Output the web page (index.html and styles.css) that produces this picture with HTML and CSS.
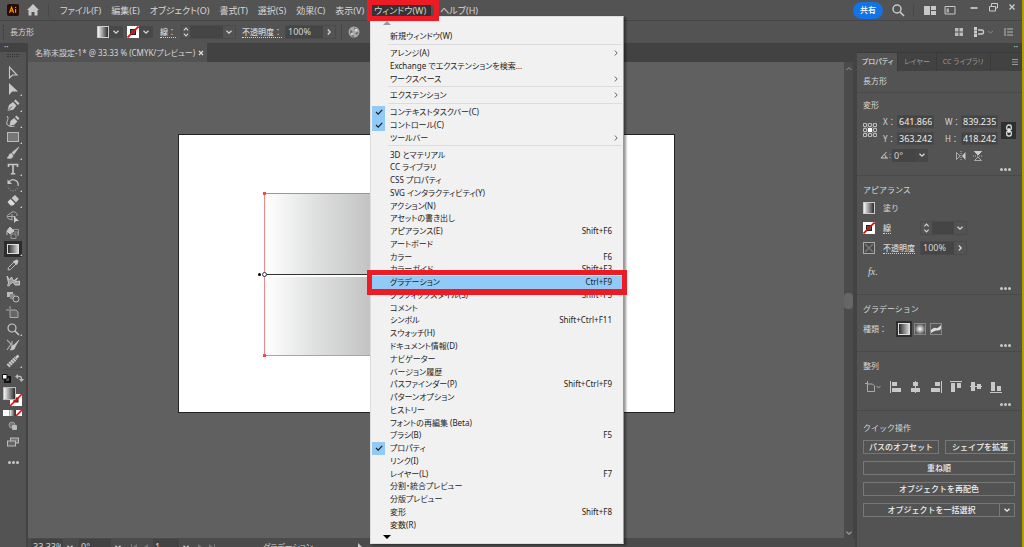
FILE: index.html
```html
<!DOCTYPE html>
<html lang="ja">
<head>
<meta charset="utf-8">
<meta name="viewport" content="width=device-width, initial-scale=1">
<title>名称未設定-1</title>
<link rel="stylesheet" href="styles.css">
</head>
<body>
<svg class="defs" aria-hidden="true">
  <defs>
    <linearGradient id="gw"><stop offset="0" stop-color="#fff"/><stop offset="1" stop-color="#222"/></linearGradient>
    <linearGradient id="gb"><stop offset="0" stop-color="#222"/><stop offset="1" stop-color="#ddd"/></linearGradient>
    <radialGradient id="gr"><stop offset="0" stop-color="#fff"/><stop offset="1" stop-color="#555"/></radialGradient>
  </defs>
  <symbol id="chev" viewBox="0 0 8 8"><path d="M1.5 2.8 4 5.2 6.5 2.8" fill="none" stroke="currentColor" stroke-width="1.3"/></symbol>
  <symbol id="next" viewBox="0 0 8 8"><path d="M2.8 1.5 5.2 4 2.8 6.5" fill="none" stroke="currentColor" stroke-width="1.3"/></symbol>
  <symbol id="sub" viewBox="0 0 8 8"><path d="M2.8 1.5 5.2 4 2.8 6.5" fill="none" stroke="currentColor" stroke-width=".9"/></symbol>
  <symbol id="spin" viewBox="0 0 8 14"><path d="M1.5 5 4 2.5 6.5 5M1.5 9 4 11.5 6.5 9" fill="none" stroke="currentColor" stroke-width="1.3"/></symbol>
  <symbol id="tick" viewBox="0 0 8 8"><path d="M1 4 3.2 6.2 7.2 1.8" fill="none" stroke="currentColor" stroke-width="1.1"/></symbol>
  <symbol id="fillsw" viewBox="0 0 12 12"><rect x=".5" y=".5" width="11" height="11" fill="url(#gw)" stroke="#ccc"/></symbol>
  <symbol id="strokesw" viewBox="0 0 12 12"><rect width="12" height="12" fill="#fff"/><rect x="3.5" y="3.5" width="5" height="5" fill="#535353" stroke="#222"/><path d="M.5 11.5 11.5.5" stroke="#f00" stroke-width="1.8"/></symbol>
</svg>

<header class="menubar">
  <svg class="logo" viewBox="0 0 12 12"><rect width="12" height="12" rx="2" fill="#2c0b00"/><path d="M2.500 8.800 4.600 3.300 6.700 8.800M3.200 7h2.800M8.600 5v3.800M8.600 3v1" fill="none" stroke="#ff9a00" stroke-width="1.1"/></svg>
  <svg class="home" viewBox="0 0 14 14"><path d="M7 1 1 7h1.500v5.500h3V9h3v3.500h3V7H13z" fill="#c8c8c8"/></svg>
  <nav class="menus">
    <button>ファイル(F)</button>
    <button>編集(E)</button>
    <button>オブジェクト(O)</button>
    <button>書式(T)</button>
    <button>選択(S)</button>
    <button>効果(C)</button>
    <button>表示(V)</button>
    <button class="open">ウィンドウ(W)</button>
    <button>ヘルプ(H)</button>
  </nav>
  <div class="window-tools">
    <button class="share">共有</button>
    <button aria-label="検索"><svg width="14" height="14" viewBox="0 0 14 14"><circle cx="6" cy="6" r="4" fill="none" stroke="#c8c8c8" stroke-width="1.5"/><path d="m9 9 4 4" stroke="#c8c8c8" stroke-width="1.7"/></svg></button>
    <i class="vline"></i>
    <button aria-label="ドキュメントの整列"><svg width="12" height="12" viewBox="0 0 12 12"><path d="M0 2h6v9H0zM7 2h5v4H7zM7 7h5v4H7z" fill="#c8c8c8"/></svg></button>
    <button aria-label="ワークスペース"><svg width="12" height="12" viewBox="0 0 12 12"><path d="M1 2.500h10v7.500H1z" fill="none" stroke="#c8c8c8"/><path d="M2.500 4.500h2.500v4H2.500z" fill="#aaa"/></svg></button>
    <div class="window-buttons">
      <button aria-label="最小化"><svg width="10" height="10" viewBox="0 0 10 10"><path d="M1.500 6h7" stroke="#ccc" stroke-width="1.7"/></svg></button>
      <button aria-label="元に戻す"><svg width="10" height="10" viewBox="0 0 10 10"><path d="M3.500 1.500h6v4.500h-2v3h-6V4.500h2zM3.500 4.500h4V6" fill="none" stroke="#ccc"/></svg></button>
      <button aria-label="閉じる"><svg width="10" height="10" viewBox="0 0 10 10"><path d="m2.500 2.500 5 5m0-5-5 5" stroke="#ccc" stroke-width="1.3"/></svg></button>
    </div>
  </div>
</header>

<section class="controlbar">
  <i class="grip"></i>
  <span class="kind">長方形</span>
  <button class="sw" aria-label="塗り"><svg width="12" height="12"><use href="#fillsw"/></svg><svg class="dark" width="14" height="12"><use href="#chev" x="3" y="2" width="8" height="8"/></svg></button>
  <button class="sw stroke-button" aria-label="線"><svg width="12" height="12"><use href="#strokesw"/></svg><svg class="dark" width="14" height="12"><use href="#chev" x="3" y="2" width="8" height="8"/></svg></button>
  <label class="dotted" for="cw">線：</label>
  <span class="combo stroke-combo"><svg width="8" height="12"><use href="#spin"/></svg><input id="cw" type="text"><svg width="12" height="12"><use href="#chev" x="2" y="2" width="8" height="8"/></svg></span>
  <label class="dotted" for="co">不透明度：</label>
  <span class="combo opacity-combo"><input id="co" type="text" value="100%"><svg width="12" height="12"><use href="#next" x="2" y="2" width="8" height="8"/></svg></span>
  <i class="vline"></i>
  <svg class="globe" width="12" height="12" viewBox="0 0 12 12"><circle cx="6" cy="6" r="5.5" fill="#aaa"/><path d="M2.500 3.500 5 6 2 8zM6 1.500l3 1L7 5zM7 7l3.500-1L9 9zM5 8l1 3-3-1z" fill="#666"/><circle cx="8" cy="4" r="1.300" fill="#ddd"/><circle cx="4" cy="8" r="1.200" fill="#ccc"/></svg>
  <div class="bar-end">
    <svg width="10" height="10" viewBox="0 0 10 10"><path d="M1 1h3.500v3.500H1zM5.500 1H9v3.500H5.500zM1 5.500h3.500V9H1zM5.500 5.500H9V9H5.500z" fill="#bbb"/></svg>
    <svg width="22" height="10" viewBox="0 0 22 10"><path d="M1 0h3v3H1zM1 3.500h3v3H1zM1 7h3v3H1z" fill="#ccc"/><path d="M5 3h3.500a2 2 0 0 1 0 4H5" fill="none" stroke="#ccc" stroke-width="1.4"/><path d="m15 4 2.500 2L20 4" fill="none" stroke="#888"/></svg>
    <svg width="10" height="10" viewBox="0 0 10 10"><path d="M1 1v8M3 2h6M3 5h6M3 8h6" stroke="#bbb"/></svg>
  </div>
</section>

<main class="workspace">
  <aside class="toolbar">
    <div class="dock-head">••</div>
    <i class="tool-grip"></i>
    <div class="tools">
      <button aria-label="選択"><svg viewBox="0 0 14 14"><path d="M3.500 1v11l3-3H11z" fill="none" stroke="#c8c8c8" stroke-width="1.1"/></svg></button>
      <button class="more" aria-label="ダイレクト選択"><svg viewBox="0 0 14 14"><path d="M3 1v12l3.200-3.500H12z" fill="#c8c8c8"/></svg></button>
      <button class="more" aria-label="ペン"><svg viewBox="0 0 14 14"><path d="m1.500 13 1.500-6 4-3 3.500 3.500-3 4zM8 3l1.500-1.500 4 4L12 7z" fill="#c8c8c8"/><path d="m2 12.500 4-4" stroke="#535353"/></svg></button>
      <button class="more" aria-label="曲線"><svg viewBox="0 0 14 14"><path d="m3.500 12 1-5 3.500-3 3.500 3.500-3 3zM9 3l1.500-1.500 3 3L12 6z" fill="#c8c8c8"/><path d="M1 2c3 3-2 6 .5 9 2 1.500 4 2 7 1" fill="none" stroke="#c8c8c8"/></svg></button>
      <button class="more" aria-label="長方形"><svg viewBox="0 0 14 14"><rect x="1.500" y="2.500" width="11" height="9" fill="#777" stroke="#bbb"/></svg></button>
      <button class="more" aria-label="ブラシ"><svg viewBox="0 0 14 14"><path d="M13 1 6 6.500 7.800 8.500zM5.500 7.500c-3 0-2 3-4.500 4.500 3 1 6 .5 6-2.500z" fill="#c8c8c8" stroke="#c8c8c8" stroke-width=".6"/></svg></button>
      <button class="more" aria-label="文字"><svg viewBox="0 0 14 14"><path d="M2.500 5V2.500h9V5M7 2.500v9M4.800 11.800h4.400" fill="none" stroke="#c8c8c8" stroke-width="1.6"/></svg></button>
      <button class="more" aria-label="回転"><svg viewBox="0 0 14 14"><path d="M3 4a5 5 0 0 1 9 4" fill="none" stroke="#c8c8c8" stroke-width="1.2"/><path d="M11.500 10a5 5 0 0 1-9.500-2" fill="none" stroke="#aaa" stroke-dasharray="1 1.500"/><path d="M1.500 1.500V6H6z" fill="#c8c8c8"/></svg></button>
      <button class="more" aria-label="消しゴム"><svg viewBox="0 0 14 14"><path d="M5.500 4 9 1l4 4-3 3.500z" fill="#c8c8c8"/><path d="m4.500 5 4.500 4.500-2 2H4.500L1.500 8z" fill="#ddd"/></svg></button>
      <button aria-label="シェイプ形成"><svg viewBox="0 0 14 14"><path d="M3 9C0 8 1 4 4 4c2-4 8-2 7 2M3 9l4 1M1.500 6.500h8M6 4v5" fill="none" stroke="#aaa"/><path d="M8 6v7l2-2h3z" fill="#ccc"/></svg></button>
      <button aria-label="ライブペイント"><svg viewBox="0 0 14 14"><path d="M1 5 4 1l4 4-4 3zM1 5v4" fill="#c8c8c8" stroke="#c8c8c8"/><path d="M7 3.500h5.500V9M5 8h5v4.500H5zM8 6h4v4" fill="none" stroke="#999"/></svg></button>
      <button class="more active" aria-label="グラデーション"><svg viewBox="0 0 14 14"><rect x="1.500" y="2.500" width="11" height="9" fill="url(#gb)" stroke="#ddd"/></svg></button>
      <button aria-label="スポイト"><svg viewBox="0 0 14 14"><path d="m2 12 .5-2.500L8 4l2 2-5.500 5.500z" fill="none" stroke="#bbb"/><path d="M7 3.500 10.500 7l1-1L12.500 3 11 1.500 8.500 2.500z" fill="#c8c8c8"/></svg></button>
      <button aria-label="パペットワープ"><svg viewBox="0 0 14 14"><path d="m1 2 2.500 4 2-3 2 4 4-3-2.500 4 4.500-1v4H9L7 8 3 11z" fill="#999" stroke="#c8c8c8"/><circle cx="2.500" cy="11" r="1.500" fill="#aaa"/></svg></button>
      <button aria-label="ブレンド"><svg viewBox="0 0 14 14"><path d="M1 2h6v5H1z" fill="#bbb"/><path d="M4 4h5v5H4z" fill="#888"/><circle cx="10" cy="9" r="3" fill="#535353" stroke="#bbb"/></svg></button>
      <button aria-label="アートボード"><svg viewBox="0 0 14 14"><path d="M4 0v3.500M0 4h3M4 4h6l2 2v5.500H4z" fill="#666" stroke="#aaa"/></svg></button>
      <button class="more" aria-label="ズーム"><svg viewBox="0 0 14 14"><circle cx="6" cy="6" r="4" fill="none" stroke="#c8c8c8" stroke-width="1.2"/><path d="m9 9 4 4" stroke="#c8c8c8" stroke-width="1.6"/></svg></button>
      <button aria-label="交差"><svg viewBox="0 0 14 14"><path d="m1 2 4 4-4 6M6 3v6" fill="none" stroke="#aaa" stroke-width="1.2"/><path d="M13 2 8 7l1 2zM8 7c-3 0-2 4-4 5 4 0 5-1 5-3z" fill="#c8c8c8" stroke="#c8c8c8" stroke-width=".6"/></svg></button>
      <button class="more" aria-label="鉛筆"><svg viewBox="0 0 14 14"><path d="m2 12 8-8" stroke="#c8c8c8" stroke-width="4" stroke-dasharray="2 .6"/><path d="m10 4 2.500-2.500" stroke="#c8c8c8" stroke-width="2.5"/></svg></button>
    </div>
    <div class="swap">
      <svg width="9" height="9" viewBox="0 0 9 9"><path d="M3 3h5v5H3z" fill="none" stroke="#111" stroke-width="2"/><path d="M.5.5h4.500v4.500H.5z" fill="#fff" stroke="#111"/></svg>
      <svg width="9" height="9" viewBox="0 0 9 9"><path d="M2 2.500h3q1.500 0 1.500 3" fill="none" stroke="#bbb" stroke-width="1.3"/><path d="M3 0v5L0 2.500zM4 5h5L6.500 8z" fill="#bbb"/></svg>
    </div>
    <svg class="paint" viewBox="0 0 20 20"><rect x="7" y="7" width="12" height="12" fill="#fff"/><rect x="11" y="11" width="4" height="4" fill="#535353" stroke="#222"/><rect x=".5" y=".5" width="12" height="12" fill="url(#gw)" stroke="#bbb"/><path d="M7 19 19 7" stroke="#f00" stroke-width="1.6"/></svg>
    <svg class="modes" viewBox="0 0 20 6"><rect width="6" height="6" fill="#fff"/><rect x="6.500" width="6" height="6" fill="url(#gw)"/><rect x="13" width="6" height="6" fill="#fff"/><path d="m13 6 6-6" stroke="#f00" stroke-width="1.6"/></svg>
    <svg class="draw-mode" viewBox="0 0 14 14"><circle cx="6" cy="6" r="3" fill="#777" stroke="#999"/><rect x="6" y="6" width="5" height="5" rx="1" fill="#bbb"/></svg>
    <svg class="screen-mode" viewBox="0 0 14 14"><rect x="4.500" y="3" width="8" height="5" fill="#777" stroke="#bbb"/><rect x="1.500" y="6" width="8" height="5" fill="#666" stroke="#bbb"/></svg>
    <button class="dots" aria-label="ツールバーを編集"><i></i><i></i><i></i></button>
  </aside>

  <section class="document">
    <div class="doc-tabs"><div class="doc-tab"><span>名称未設定-1* @ 33.33 % (CMYK/プレビュー)</span><button aria-label="タブを閉じる"><svg width="8" height="8" viewBox="0 0 8 8"><path d="m2 2 4 4m0-4L2 6" stroke="#ddd" stroke-width="1.2"/></svg></button></div></div>
    <div class="view">
      <div class="canvas">
        <div class="artboard">
          <div class="shape"><i class="axis"></i><i class="origin"></i><i class="pivot"></i></div>
        </div>
      </div>
      <div class="scroll"><svg width="8" height="8" viewBox="0 0 8 8"><path d="M1.500 5 4 2.500 6.500 5" fill="none" stroke="#999"/></svg><i></i><svg width="8" height="8"><use href="#chev"/></svg></div>
    </div>
    <footer class="status">
      <select class="s-zoom" aria-label="ズーム"><option>33.33%</option></select><svg width="14" height="12"><use href="#chev" x="3" y="2" width="8" height="8"/></svg>
      <select class="s-rot" aria-label="回転"><option>0°</option></select><svg width="14" height="12"><use href="#chev" x="3" y="2" width="8" height="8"/></svg>
      <svg class="pages" width="20" height="10" viewBox="0 0 20 10"><path d="M2 2h1v6H2zM8 2v6L4 5zM19 2v6l-4-3z" fill="#777"/></svg>
      <select class="s-page" aria-label="アートボード"><option>1</option></select><svg width="14" height="12"><use href="#chev" x="3" y="2" width="8" height="8"/></svg>
      <svg class="pages" width="20" height="10" viewBox="0 0 20 10"><path d="M1 2v6l4-3zM12 2v6l4-3zM17 2h1v6h-1z" fill="#777"/></svg>
      <span class="tool-name">グラデーション</span>
      <svg width="8" height="10" viewBox="0 0 8 10"><path d="M2 1v8l4-4z" fill="#ccc"/></svg>
    </footer>
  </section>

  <aside class="panel">
    <div class="dock-head">••</div>
    <div class="tabs"><button class="current">プロパティ</button><button>レイヤー</button><button>CC ライブラリ</button><svg width="8" height="8" viewBox="0 0 8 8"><path d="M1 1.500h6M1 4h6M1 6.500h6" stroke="#999"/></svg></div>
    <section class="kind-section"><h2>長方形</h2></section>
    <section class="transform">
      <h2>変形</h2>
      <div class="xywh">
        <svg class="anchor" width="14" height="14" viewBox="0 0 14 14"><path d="M2 2h10v10H2zM2 7h10M7 2v10M2 2l10 10M12 2 2 12" fill="none" stroke="#999"/><path d="M.5.5h3v3h-3zM5.500.5h3v3h-3zM10.500.5h3v3h-3zM.5 5.500h3v3h-3zM10.500 5.500h3v3h-3zM.5 10.500h3v3h-3zM5.500 10.500h3v3h-3zM10.500 10.500h3v3h-3z" fill="#535353" stroke="#bbb"/><path d="M5 5h4v4H5z" fill="#fff"/></svg>
        <label for="px">X：</label><input id="px" type="text" value="641.866">
        <label class="second" for="pw">W：</label><input id="pw" type="text" value="839.235">
        <button class="link" aria-label="縦横比を固定"><svg width="8" height="13" viewBox="0 0 8 13"><rect x="1.700" y="1" width="4.600" height="5" rx="2" fill="none" stroke="#ddd" stroke-width="1.3"/><rect x="1.700" y="7" width="4.600" height="5" rx="2" fill="none" stroke="#ddd" stroke-width="1.3"/><path d="M4 4v5" stroke="#fff" stroke-width="1.3"/></svg></button>
        <label for="py">Y：</label><input id="py" type="text" value="363.242">
        <label class="second" for="ph">H：</label><input id="ph" type="text" value="418.242">
      </div>
      <div class="angle">
        <svg width="11" height="9" viewBox="0 0 11 9"><path d="M6.500 1 1 7h7M4 3.500Q6.500 4.500 6 7" fill="none" stroke="#ccc"/><path d="M9.500 3h1v1h-1zM9.500 6h1v1h-1z" fill="#aaa"/></svg>
        <select aria-label="回転角度"><option>0°</option></select><svg class="chev-box" width="12" height="13"><use href="#chev" x="2" y="2" width="8" height="8"/></svg>
        <svg class="flip" width="10" height="10" viewBox="0 0 10 10"><path d="M.5 1.500v7L4 5z" fill="none" stroke="#aaa"/><path d="M5 0v10" stroke="#bbb" stroke-dasharray="1 1"/><path d="M9.500 1v8L6 5z" fill="#ccc"/></svg>
        <svg width="10" height="10" viewBox="0 0 10 10"><path d="M1.500.5h7L5 4z" fill="#ccc" stroke="#ccc"/><path d="M0 5h10" stroke="#bbb" stroke-dasharray="1 1"/><path d="M1.500 9.500h7L5 6z" fill="none" stroke="#aaa"/></svg>
      </div>
      <button class="dots" aria-label="詳細オプション"><i></i><i></i><i></i></button>
    </section>
    <section class="appearance">
      <h2>アピアランス</h2>
      <div class="prop"><svg width="12" height="12"><use href="#fillsw"/></svg><span>塗り</span></div>
      <div class="prop"><svg width="12" height="12"><use href="#strokesw"/></svg><label class="dotted" for="sw">線</label><span class="combo"><svg width="11" height="12"><use href="#spin"/></svg><input id="sw" type="text"><svg width="12" height="12"><use href="#chev" x="2" y="2" width="8" height="8"/></svg></span></div>
      <div class="prop"><svg width="12" height="12" viewBox="0 0 12 12"><rect x=".5" y=".5" width="11" height="11" fill="#4a4a4a" stroke="#aaa"/><path d="m2 2 8 8m0-8-8 8" stroke="#777" stroke-width="1.5"/></svg><label class="dotted" for="op">不透明度</label><span class="combo"><input class="wide" id="op" type="text" value="100%"><svg width="12" height="12"><use href="#next" x="2" y="2" width="8" height="8"/></svg></span></div>
      <div class="fx">fx.</div>
      <button class="dots" aria-label="詳細オプション"><i></i><i></i><i></i></button>
    </section>
    <section class="gradient">
      <h2>グラデーション</h2>
      <div class="types"><span>種類：</span>
        <button class="on" aria-label="線形"><svg width="12" height="12" viewBox="0 0 12 12"><rect x=".5" y=".5" width="11" height="11" fill="url(#gb)" stroke="#ddd"/></svg></button>
        <button aria-label="円形"><svg width="12" height="12" viewBox="0 0 12 12"><rect x=".5" y=".5" width="11" height="11" fill="url(#gr)" stroke="#888"/></svg></button>
        <button aria-label="フリー"><svg width="12" height="12" viewBox="0 0 12 12"><rect x=".5" y=".5" width="11" height="11" fill="#555" stroke="#888"/><path d="M1 7q3-3 5-2t5-3v4Q9 8 7 7.500T1 10z" fill="#ddd"/></svg></button>
      </div>
      <button class="dots" aria-label="詳細オプション"><i></i><i></i><i></i></button>
    </section>
    <section class="align">
      <h2>整列</h2>
      <div class="aligns">
        <svg width="16" height="12" viewBox="0 0 16 12"><path d="M2.500 0v3M0 2.500h3M2.500 3h5l2 2v5.500h-7zM11.500 5l2 2 2-2" fill="none" stroke="#aaa"/></svg>
        <button aria-label="左に整列"><svg viewBox="0 0 12 12"><path d="M0 0h1v12H0zM2 1h5v4H2zM2 7h9v4H2z" fill="#c8c8c8"/></svg></button>
        <button aria-label="中央に整列"><svg viewBox="0 0 12 12"><path d="M5 0h1v12H5zM3 1h5v4H3zM1 7h9v4H1z" fill="#c8c8c8"/></svg></button>
        <button aria-label="右に整列"><svg viewBox="0 0 12 12"><path d="M11 0h1v12h-1zM5 1h5v4H5zM1 7h9v4H1z" fill="#c8c8c8"/></svg></button>
        <button aria-label="上に整列"><svg viewBox="0 0 12 12"><path d="M0 0h12v1H0zM1 2h4v9H1zM7 2h4v5H7z" fill="#c8c8c8"/></svg></button>
        <button aria-label="垂直中央に整列"><svg viewBox="0 0 12 12"><path d="M0 5h12v1H0zM1 1h4v9H1zM7 3h4v5H7z" fill="#c8c8c8"/></svg></button>
        <button aria-label="下に整列"><svg viewBox="0 0 12 12"><path d="M0 11h12v1H0zM1 1h4v9H1zM7 5h4v5H7z" fill="#c8c8c8"/></svg></button>
      </div>
      <button class="dots" aria-label="詳細オプション"><i></i><i></i><i></i></button>
    </section>
    <section class="quick">
      <h2>クイック操作</h2>
      <div class="actions">
        <div class="pair"><button>パスのオフセット</button><button>シェイプを拡張</button></div>
        <button>重ね順</button>
        <button>オブジェクトを再配色</button>
        <div class="split"><button>オブジェクトを一括選択</button><button aria-label="選択オプション"><svg width="8" height="8"><use href="#chev"/></svg></button></div>
      </div>
    </section>
  </aside>
</main>

<div class="dropdown" role="menu">
  <div class="arrow up"></div>
  <button role="menuitem"><span>新規ウィンドウ(W)</span></button>
  <hr>
  <button role="menuitem"><span>アレンジ(A)</span><svg><use href="#sub"/></svg></button>
  <button role="menuitem"><span>Exchange でエクステンションを検索...</span></button>
  <button role="menuitem"><span>ワークスペース</span><svg><use href="#sub"/></svg></button>
  <hr>
  <button role="menuitem"><span>エクステンション</span><svg><use href="#sub"/></svg></button>
  <hr>
  <button role="menuitem" class="checked"><b><svg><use href="#tick"/></svg></b><span>コンテキストタスクバー(C)</span></button>
  <button role="menuitem" class="checked"><b><svg><use href="#tick"/></svg></b><span>コントロール(C)</span></button>
  <button role="menuitem"><span>ツールバー</span><svg><use href="#sub"/></svg></button>
  <hr>
  <button role="menuitem"><span>3D とマテリアル</span></button>
  <button role="menuitem"><span>CC ライブラリ</span></button>
  <button role="menuitem"><span>CSS プロパティ</span></button>
  <button role="menuitem"><span>SVG インタラクティビティ(Y)</span></button>
  <button role="menuitem"><span>アクション(N)</span></button>
  <button role="menuitem"><span>アセットの書き出し</span></button>
  <button role="menuitem"><span>アピアランス(E)</span><kbd>Shift+F6</kbd></button>
  <button role="menuitem"><span>アートボード</span></button>
  <button role="menuitem"><span>カラー</span><kbd>F6</kbd></button>
  <button role="menuitem"><span>カラーガイド</span><kbd>Shift+F3</kbd></button>
  <button role="menuitem" class="chosen"><span>グラデーション</span><kbd>Ctrl+F9</kbd></button>
  <button role="menuitem"><span>グラフィックスタイル(S)</span><kbd>Shift+F5</kbd></button>
  <button role="menuitem"><span>コメント</span></button>
  <button role="menuitem"><span>シンボル</span><kbd>Shift+Ctrl+F11</kbd></button>
  <button role="menuitem"><span>スウォッチ(H)</span></button>
  <button role="menuitem"><span>ドキュメント情報(D)</span></button>
  <button role="menuitem"><span>ナビゲーター</span></button>
  <button role="menuitem"><span>バージョン履歴</span></button>
  <button role="menuitem"><span>パスファインダー(P)</span><kbd>Shift+Ctrl+F9</kbd></button>
  <button role="menuitem"><span>パターンオプション</span></button>
  <button role="menuitem"><span>ヒストリー</span></button>
  <button role="menuitem"><span>フォントの再編集 (Beta)</span></button>
  <button role="menuitem"><span>ブラシ(B)</span><kbd>F5</kbd></button>
  <button role="menuitem" class="checked"><b><svg><use href="#tick"/></svg></b><span>プロパティ</span></button>
  <button role="menuitem"><span>リンク(I)</span></button>
  <button role="menuitem"><span>レイヤー(L)</span><kbd>F7</kbd></button>
  <button role="menuitem"><span>分割・統合プレビュー</span></button>
  <button role="menuitem"><span>分版プレビュー</span></button>
  <button role="menuitem"><span>変形</span><kbd>Shift+F8</kbd></button>
  <button role="menuitem"><span>変数(R)</span></button>
  <div class="arrow down"></div>
</div>
</body>
</html>
```

FILE: styles.css
```css
* { box-sizing: border-box; }
body {
  margin: 0;
  height: 100vh;
  overflow: hidden;
  display: flex;
  flex-direction: column;
  position: relative;
  border-right: 2px solid #b3a000;
  background: #535353;
  color: #d6d6d6;
  font: 8px/12px "Noto Sans", "Noto Sans CJK JP", sans-serif;
}
.menus, .doc-tab, .tabs, .status, .dropdown { font-feature-settings: "palt"; }
button, input, select {
  margin: 0;
  padding: 0;
  border: 0;
  border-radius: 0;
  background: none;
  color: inherit;
  font: inherit;
  font-feature-settings: inherit;
  appearance: none;
}
svg { display: block; flex: none; }
h2 { margin: 0; font-size: 8px; font-weight: 400; line-height: 16px; }
.defs { position: absolute; width: 0; height: 0; }
.vline { width: 1px; height: 13px; background: #484848; }
.dotted { border-bottom: 1px dotted #ccc; font-weight: 500; line-height: 11px; }

/* menu bar */
.menubar {
  flex: none;
  height: 21px;
  display: flex;
  align-items: center;
  padding-left: 7px;
  border-bottom: 1px solid #454545;
}
.logo { width: 12px; height: 12px; }
.home { width: 14px; height: 14px; margin-left: 7px; }
.menus {
  display: flex;
  gap: 10px;
  margin-left: 8px;
  padding-left: 11px;
  border-left: 1px solid #484848;
  font-size: 9px;
  line-height: 13px;
  white-space: nowrap;
}
.menus .open {
  position: relative;
  z-index: 5;
  margin: 0 -1px 0 -3px;
  padding: 0 5px 0 3px;
  background: #333;
}
.menus .open::after {
  content: "";
  position: absolute;
  inset: -4px -8px -4px -4px;
  border: 5px solid #ed1c24;
}
.window-tools { display: flex; align-items: center; gap: 8px; margin-left: auto; }
.share {
  width: 30px;
  height: 17px;
  border-radius: 9px;
  background: #1473e6;
  color: #fff;
  font-weight: 500;
}
.window-tools > .vline { margin-right: 2px; }
.window-buttons { display: flex; gap: 9px; padding: 0 5px 6px; }

/* control bar */
.controlbar { flex: none; height: 22px; display: flex; align-items: center; padding-left: 3px; }
.grip { width: 2px; height: 14px; margin-right: 5px; border-left: 1px dotted #3c3c3c; }
.kind { width: 87px; }
.sw { display: flex; align-items: center; }
.stroke-button { margin: 0 7px 0 4px; }
.dark, .chev-box { background: #484848; }
.combo { display: flex; align-items: center; border: 1px solid #4a4a4a; }
.combo input { height: 12px; padding: 0 2px; background: #454545; font-size: 9px; }
.stroke-combo { margin: 0 6px 0 5px; }
.stroke-combo input { width: 33px; }
.opacity-combo { margin: 0 5px 0 3px; }
.opacity-combo input { width: 37px; }
.controlbar > .vline { height: 16px; margin-right: 6px; }
.bar-end { display: flex; align-items: center; gap: 9px; margin-left: auto; padding-right: 8px; }

/* workspace */
.workspace { flex: 1; min-height: 0; display: flex; }
.dock-head {
  height: 9px;
  padding: 0 4px;
  background: #424242;
  color: #bbb;
  font-size: 6px;
  line-height: 9px;
}
.toolbar {
  flex: none;
  width: 28px;
  display: flex;
  flex-direction: column;
  align-items: center;
  border-right: 2px solid #434343;
}
.toolbar .dock-head { align-self: stretch; }
.tool-grip { width: 12px; height: 3px; margin: 2px 0 8px; border-top: 1px dotted #333; border-bottom: 1px dotted #333; }
.tools { display: grid; grid-auto-rows: 16px; border-bottom: 1px solid #4a4a4a; }
.tools button { position: relative; width: 18px; display: grid; place-items: center; }
.tools svg { width: 14px; height: 14px; }
.tools .active { background: #2c2c2c; }
.tools .more::after {
  content: "";
  position: absolute;
  right: 0;
  bottom: 1px;
  border: 1px solid #ccc;
  border-left-color: transparent;
  border-top-color: transparent;
}
.swap { display: flex; gap: 4px; margin: 4px 0; }
.paint { width: 20px; height: 20px; }
.modes { width: 20px; height: 6px; margin: 3px 0; }
.draw-mode { width: 14px; height: 14px; }
.screen-mode { width: 14px; height: 14px; margin: 2px 0 8px; }
.dots { display: flex; gap: 1px; align-items: center; height: 11px; }
.dots i { width: 3px; height: 3px; border-radius: 50%; background: #c8c8c8; }

.document { flex: 1; min-width: 0; display: flex; flex-direction: column; }
.doc-tabs { flex: none; height: 19px; display: flex; background: #424242; }
.doc-tab {
  display: flex;
  align-items: center;
  gap: 2px;
  padding: 0 2px 0 7px;
  background: #535353;
  white-space: nowrap;
}
.view { flex: 1; min-height: 0; display: flex; }
.canvas { flex: 1; position: relative; overflow: hidden; background: #606060; }
.artboard {
  position: absolute;
  left: 150px;
  top: 72px;
  width: 497px;
  height: 279px;
  border: 1px solid #222;
  background: #fff;
}
.shape {
  position: absolute;
  left: 85px;
  top: 58px;
  width: 325px;
  height: 163px;
  border: 1px solid #e88;
  border-top-color: #6ab;
  background: linear-gradient(90deg, #fff, #dfe1e0 50px, #c2c2c2 106px, #000);
}
.shape::before, .shape::after {
  content: "";
  position: absolute;
  left: -2px;
  width: 3px;
  height: 3px;
  background: #f44;
}
.shape::before { top: -2px; }
.shape::after { bottom: -2px; }
.axis { position: absolute; left: 0; right: 0; top: 80px; height: 3px; background: #fff; border-top: 1px solid #333; }
.origin { position: absolute; left: -3px; top: 78px; width: 5px; height: 5px; border: 1px solid #333; border-radius: 50%; background: #fff; }
.pivot { position: absolute; left: -7px; top: 79px; width: 3px; height: 3px; border-radius: 50%; background: #000; }
.scroll {
  flex: none;
  width: 11px;
  display: flex;
  flex-direction: column;
  align-items: center;
  justify-content: space-between;
  padding: 3px 0 1px;
  border-right: 2px solid #434343;
  background: #4b4b4b;
  color: #999;
}
.scroll i { width: 9px; height: 16px; border-radius: 4px; background: #666; }
.status {
  flex: none;
  height: 18px;
  margin-bottom: -9px;
  display: flex;
  align-items: center;
  padding-left: 3px;
  background: #4b4b4b;
}
.status select { height: 16px; padding: 0 2px; background: #424242; font-size: 9px; }
.s-zoom { width: 32px; }
.s-rot { width: 32px; margin-left: 2px; }
.s-page { width: 26px; }
.pages { margin: 0 4px; }
.tool-name { flex: 0 0 93px; margin-left: 42px; }

/* properties panel */
.panel { flex: none; width: 167px; border-left: 2px solid #434343; }
.panel .dock-head { text-align: right; }
.tabs { height: 19px; display: flex; background: #424242; color: #999; border-top: 1px solid #3a3a3a; font-size: 7px; }
.tabs button { padding: 0 6px; border-right: 1px solid #3a3a3a; white-space: nowrap; }
.tabs .current { padding: 0 4px 0 5px; background: #535353; color: #eee; }
.tabs svg { margin: 5px 3px 0 auto; }
.panel section { padding: 6px 6px 0; border-bottom: 1px solid #494949; }
.panel section.kind-section { padding: 2px 6px 3px; }
.panel section.transform { padding-top: 4px; }
.panel section.quick { padding-top: 9px; border: 0; }
.panel .dots { margin-left: auto; margin-right: 5px; }
.xywh {
  display: grid;
  grid-template-columns: 20px 14px 37px 27px 37px 16px;
  grid-auto-rows: 17px;
  align-items: center;
}
.anchor { grid-row: span 2; }
.link { grid-column: 6; grid-row: 1 / span 2; width: 15px; height: 17px; margin-left: 3px; display: grid; place-items: center; background: #2f2f2f; }
.second { padding-left: 11px; }
.xywh label { white-space: nowrap; }
.xywh input { width: 37px; height: 13px; padding: 0 1px; border: 1px solid #4a4a4a; background: #454545; color: #eee; font-size: 9px; text-align: right; }
.angle { height: 17px; display: flex; align-items: center; padding-left: 17px; }
.angle select { width: 24px; height: 13px; margin-left: 1px; padding: 0 2px; background: #454545; font-size: 9px; }
.angle .flip { margin: 0 7px 0 28px; }
.prop { height: 20px; display: flex; align-items: center; }
.prop > svg { margin-right: 8px; }
.prop .combo { margin-left: auto; margin-right: 49px; }
.prop .combo input { width: 22px; }
.prop .combo .wide { width: 33px; }
.fx { height: 25px; padding: 7px 5px 0; font: italic 10px/13px "Liberation Serif", serif; }
.types { height: 23px; display: flex; align-items: center; }
.types span { width: 33px; }
.types button { padding: 2px; }
.types .on { background: #2f2f2f; }
.aligns { height: 25px; display: flex; align-items: center; gap: 8px; padding-left: 2px; }
.aligns > svg { margin-right: 1px; }
.aligns button svg { width: 12px; height: 12px; }
.actions { display: grid; gap: 7px; margin: 4px 0 0; padding-right: 1px; }
.actions button { height: 14px; border: 1px solid #777; color: #eee; line-height: 12px; font-weight: 500; white-space: nowrap; }
.pair { display: grid; grid-template-columns: 76px 1fr; gap: 6px; }
.split { display: grid; grid-template-columns: 1fr 15px; }
.split button + button { border-left: 0; display: grid; place-items: center; }

/* window menu */
.dropdown {
  position: absolute;
  z-index: 4;
  left: 370px;
  top: 16px;
  bottom: 3px;
  width: 254px;
  display: flex;
  flex-direction: column;
  padding: 0 1px;
  border: 1px solid #ddd;
  border-right-color: #999;
  background: #f1f1f1;
  box-shadow: 2px 1px 2px #0006;
  color: #1c1c1c;
}
.dropdown button {
  flex: 1 1 0;
  min-height: 0;
  position: relative;
  display: flex;
  align-items: center;
  padding: 0 10px 0 18px;
  text-align: left;
  line-height: 12px;
  white-space: nowrap;
}
.dropdown button > svg { width: 8px; height: 8px; margin: 0 -8px 0 auto; color: #555; }
.dropdown kbd { margin-left: auto; font: inherit; }
.dropdown hr { flex: 0 0 4px; margin: 0 0 0 16px; border: 0; background: linear-gradient(transparent 1px, #dcdcdc 1px, #dcdcdc 2px, transparent 2px); }
.dropdown .checked { padding-left: 0; }
.checked b { width: 13px; align-self: stretch; display: grid; place-items: center; margin-right: 5px; background: #91c9f7; }
.checked svg { width: 8px; height: 8px; }
.dropdown .chosen { z-index: 1; background: #91c9f7; }
.chosen::after { content: ""; position: absolute; inset: -6px -5px; border: 5px solid #ed1c24; border-bottom-width: 6px; }
.arrow { flex: 0 0 13px; padding: 4px 0 0 11px; }
.arrow.down { flex-basis: 12px; }
.arrow::before { content: ""; display: block; width: 0; border: 4px solid transparent; }
.up::before { border-top: 0; border-bottom-color: #999; }
.down::before { border-bottom: 0; border-top-color: #000; }
```
